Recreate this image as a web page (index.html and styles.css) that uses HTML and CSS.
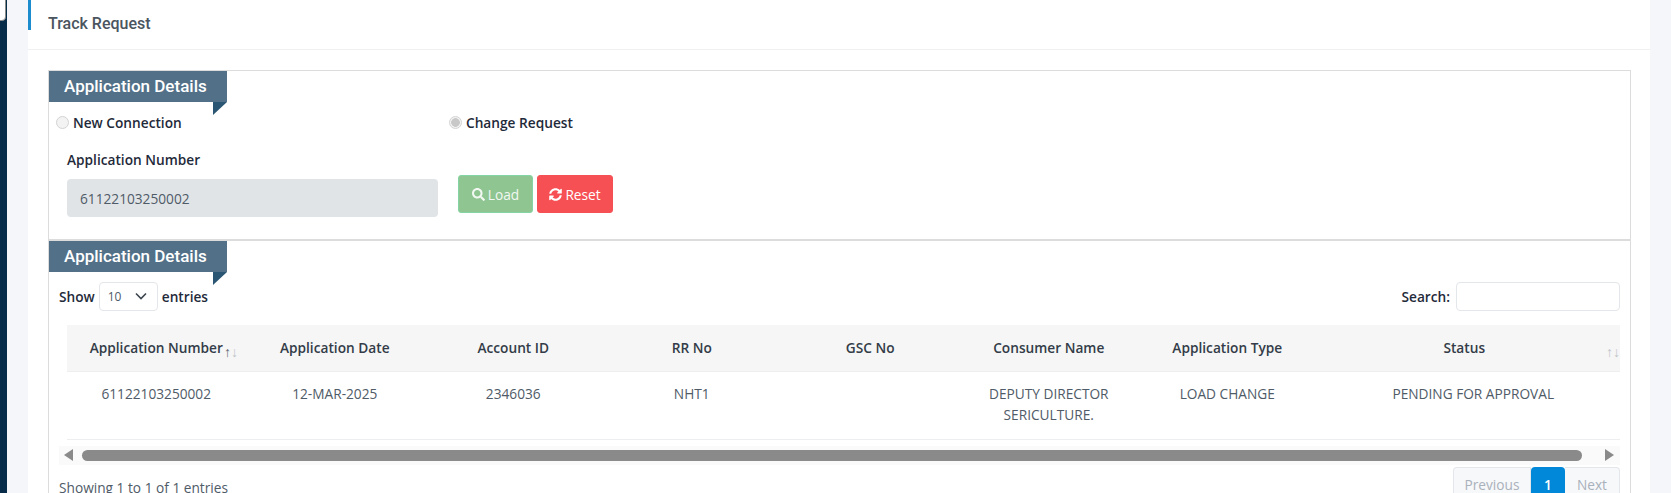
FILE: index.html
```html
<!DOCTYPE html>
<html lang="en">
<head>
<meta charset="utf-8">
<title>Track Request</title>
<link rel="stylesheet" href="styles.css">
</head>
<body>
<div class="shell">
  <aside class="sidebar"><span class="sidebar-tab"></span></aside>
  <main class="content">
    <section class="card">
      <header class="card-title"><h1>Track Request</h1></header>
      <div class="card-body">
        <div class="box">
          <div class="ribbon"><h2>Application Details</h2></div>
          <div class="radios">
            <label class="radio radio-first"><input type="radio" name="kind" disabled><span>New Connection</span></label>
            <label class="radio"><input type="radio" name="kind" checked disabled><span>Change Request</span></label>
          </div>
          <div class="load-row">
            <div class="field">
              <label class="field-label" for="appno">Application Number</label>
              <input class="field-input" id="appno" value="61122103250002" disabled>
            </div>
            <button class="btn btn-load" type="button">
              <svg class="ico" viewBox="0 0 512 512"><path fill="currentColor" d="M505 442.7L405.3 343c-4.5-4.5-10.6-7-17-7H372c27.6-35.3 44-79.7 44-128C416 93.1 322.9 0 208 0S0 93.1 0 208s93.1 208 208 208c48.3 0 92.7-16.4 128-44v16.3c0 6.4 2.5 12.5 7 17l99.7 99.7c9.4 9.4 24.6 9.4 33.9 0l28.3-28.3c9.4-9.4 9.4-24.6.1-34zM208 336c-70.7 0-128-57.2-128-128 0-70.7 57.2-128 128-128 70.7 0 128 57.2 128 128 0 70.7-57.2 128-128 128z"/></svg>
              Load</button>
            <button class="btn btn-reset" type="button">
              <svg class="ico" viewBox="0 0 512 512"><path fill="currentColor" d="M370.72 133.28C339.458 104.008 298.888 87.962 255.848 88c-77.458.068-144.328 53.178-162.791 126.85-1.344 5.363-6.122 9.15-11.651 9.15H24.103c-7.498 0-13.194-6.807-11.807-14.176C33.933 94.924 134.813 8 256 8c66.448 0 126.791 26.136 171.315 68.685L463.03 40.97C478.149 25.851 504 36.559 504 57.941V192c0 13.255-10.745 24-24 24H345.941c-21.382 0-32.09-25.851-16.971-40.971l41.75-41.749zM32 296h134.059c21.382 0 32.09 25.851 16.971 40.971l-41.75 41.75c31.262 29.273 71.835 45.319 114.876 45.28 77.418-.07 144.315-53.144 162.787-126.849 1.344-5.363 6.122-9.15 11.651-9.15h57.304c7.498 0 13.194 6.807 11.807 14.176C478.067 417.076 377.187 504 256 504c-66.448 0-126.791-26.136-171.315-68.685L48.97 471.03C33.851 486.149 8 475.441 8 454.059V320c0-13.255 10.745-24 24-24z"/></svg>
              Reset</button>
          </div>
          <div class="divider"></div>
          <div class="ribbon"><h2>Application Details</h2></div>
          <div class="dt-top">
            <div class="dt-length">Show
              <span class="dt-select">10
                <svg class="chev" viewBox="0 0 12 8"><path d="M1 1.5l5 5 5-5" fill="none" stroke="currentColor" stroke-width="1.6"/></svg>
              </span>
              entries</div>
            <div class="dt-search"><span>Search:</span><input class="dt-input" type="text" aria-label="Search"></div>
          </div>
          <div class="dt-scroll">
            <table class="dt">
              <colgroup>
                <col class="c"><col class="c"><col class="c"><col class="c"><col class="c"><col class="c"><col class="c"><col class="c-last">
              </colgroup>
              <thead>
                <tr>
                  <th>Application Number<span class="sort sort-inline"><b>↑</b><i>↓</i></span></th>
                  <th>Application Date</th>
                  <th>Account ID</th>
                  <th>RR No</th>
                  <th>GSC No</th>
                  <th>Consumer Name</th>
                  <th>Application Type</th>
                  <th class="th-status">Status<span class="sort sort-end"><i>↑</i><i>↓</i></span></th>
                </tr>
              </thead>
              <tbody>
                <tr>
                  <td>61122103250002</td>
                  <td>12-MAR-2025</td>
                  <td>2346036</td>
                  <td>NHT1</td>
                  <td></td>
                  <td>DEPUTY DIRECTOR SERICULTURE.</td>
                  <td>LOAD CHANGE</td>
                  <td class="td-status">PENDING FOR APPROVAL</td>
                </tr>
              </tbody>
            </table>
          </div>
          <div class="hscroll">
            <span class="arrow arrow-left"></span>
            <span class="thumb"></span>
            <span class="arrow arrow-right"></span>
          </div>
          <div class="dt-bottom">
            <div class="dt-info">Showing 1 to 1 of 1 entries</div>
            <div class="pager">
              <span class="page page-off page-prev">Previous</span>
              <span class="page page-on">1</span>
              <span class="page page-off page-next">Next</span>
            </div>
          </div>
        </div>
      </div>
    </section>
  </main>
</div>
</body>
</html>
```

FILE: styles.css
```css
* { box-sizing: border-box; }
html, body { margin: 0; height: 493px; overflow: hidden; }
body { font-family: "Open Sans", "Noto Sans", sans-serif; font-size: 13.7px; color: #4f5b67; background: #f5f6fa; }
.shell { display: flex; height: 493px; }
.sidebar { position: relative; width: 7px; flex: none; background: #062c49; }
.sidebar-tab { position: absolute; left: -6px; top: -6px; width: 12px; height: 27px; background: #fff; border: 1px solid #8a8a8a; border-radius: 4px; }
.content { flex: 1; padding: 0 21px; min-width: 0; }
.card { width: 1622px; height: 520px; background: #fff; }
.card-title { height: 50px; border-bottom: 1px solid #eef0f2; padding: 14px 0 0 20px; position: relative; }
.card-title::before { content: ""; position: absolute; left: 0; top: 0; width: 3px; height: 30px; background: #1c8ccf; }
.card-title h1 { margin: 0; font: 500 16px/20px Roboto, sans-serif; color: #4a5560; }
.card-body { padding: 20px 19px 0 20px; }
.box { border: 1px solid #dcdcdc; border-width: 1px 1px 0 1px; height: 450px; }
.ribbon { position: relative; width: 178px; height: 31px; background: #527189; padding-left: 15px; }
.ribbon::after { content: ""; position: absolute; right: 0; top: 31px; border-style: solid; border-width: 13px 14px 0 0; border-color: #2b5673 transparent transparent transparent; }
.ribbon h2 { margin: 0; font: 500 17px/31px Roboto, sans-serif; color: #fff; }
.radios { display: flex; height: 29px; padding: 13px 0 0 7px; }
.radio { display: flex; align-items: center; height: 14px; font-weight: 600; color: #1f2a3a; }
.radio input { appearance: none; margin: 0 4px 0 0; width: 13px; height: 13px; border: 1px solid #d3d3d3; border-radius: 50%; background: #f3f3f3; }
.radio input:checked { background: radial-gradient(circle, #c8c8c8 0 4px, #f3f3f3 4.6px); }
.radio-first { width: 393px; }
.load-row { display: flex; align-items: flex-end; padding-left: 18px; height: 109px; padding-bottom: 23px; }
.field { width: 371px; margin-right: 20px; }
.field-label { display: block; font-weight: 600; color: #1f2a3a; margin-bottom: 10px; line-height: 18px; }
.field-input { display: block; width: 100%; height: 38px; border: 0; border-radius: 4px; background: #e1e4e7; padding: 0 13px; font: 13.7px "Open Sans", sans-serif; color: #4f5b67; opacity: 1; }
.btn { display: inline-flex; align-items: center; justify-content: center; gap: 3px; height: 38px; border-radius: 3px; font: 13.7px "Open Sans", sans-serif; color: #fff; padding: 0; margin: 0 0 4px; }
.btn-load { width: 75px; margin-right: 4px; background: #8fc591; border: 1px solid #84d5a3; color: #f2f8f2; }
.btn-reset { width: 76px; background: #f65055; border: 1px solid #f65055; }
.ico { width: 13px; height: 13px; }
.divider { height: 2px; background: #dcdcdc; margin-top: -1px; }
.dt-top { display: flex; justify-content: space-between; align-items: center; height: 53px; padding: 0 10px 5px 10px; font-weight: 600; color: #1f2a3a; }
.dt-length { display: flex; align-items: center; gap: 4px; }
.dt-select { display: flex; align-items: center; justify-content: space-between; width: 59px; height: 29px; padding: 0 10px 0 8px; border: 1px solid #e3e6ea; border-radius: 4px; font-weight: 400; font-size: 12px; color: #4f5b67; }
.chev { width: 12px; height: 8px; color: #3d4650; }
.dt-search { display: flex; align-items: center; gap: 6px; }
.dt-input { width: 164px; height: 29px; border: 1px solid #e3e6ea; border-radius: 4px; background: #fff; }
.dt-scroll { padding-left: 18px; margin-right: 10px; }
.dt { width: 1553px; table-layout: fixed; border-collapse: collapse; }
.c { width: 178.5px; }
.c-last { width: 303.5px; }
.dt th { position: relative; height: 46px; padding: 0 0 1px; background: #f6f6f6; border-bottom: 1px solid #eceef0; font-weight: 600; color: #333c48; text-align: center; }
.dt td { height: 68px; padding: 11px 24px 0; vertical-align: top; text-align: center; line-height: 21px; border-bottom: 1px solid #eceef0; }
.dt .th-status { padding-right: 8px; }
.dt .td-status { padding-left: 34px; }
.sort { font-size: 14px; font-weight: 400; line-height: 1; color: #bfc4c9; }
.sort i, .sort b { font-style: normal; font-weight: 400; }
.sort b { color: #5d6872; }
.sort-inline { position: absolute; left: 157px; top: 20px; }
.sort-end { position: absolute; right: 0; top: 20px; }
.hscroll { display: flex; align-items: center; height: 19px; margin: 6px 10px 0 10px; padding: 0 6px 0 5px; background: #fafafa; }
.thumb { width: 1500px; height: 11px; margin-left: 9px; border-radius: 6px; background: #8a8a8a; }
.arrow { border-style: solid; width: 0; height: 0; }
.arrow-left { border-width: 6px 9px 6px 0; border-color: transparent #8a8a8a transparent transparent; }
.arrow-right { border-width: 6px 0 6px 9px; border-color: transparent transparent transparent #8a8a8a; margin-left: auto; }
.dt-bottom { display: flex; justify-content: space-between; align-items: flex-start; padding: 2px 10px 0; }
.dt-info { padding-top: 12px; line-height: 18px; }
.pager { display: flex; }
.page { height: 35px; line-height: 35px; text-align: center; font-size: 13.7px; }
.page-off { background: #f7f8fa; border: 1px solid #e3e6ea; border-bottom: 0; color: #a9b1ba; line-height: 33px; }
.page-prev { width: 78px; border-radius: 4px 0 0 0; }
.page-next { width: 55px; border-radius: 0 4px 0 0; border-left: 0; }
.page-on { width: 34px; background: #0288d9; color: #fff; font-weight: 600; border-radius: 4px 4px 0 0; }
```
